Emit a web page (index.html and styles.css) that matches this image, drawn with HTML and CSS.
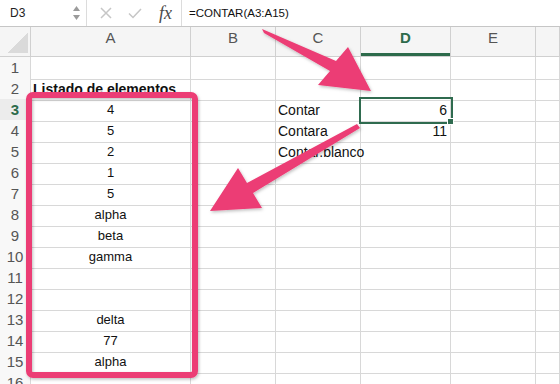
FILE: index.html
```html
<!DOCTYPE html>
<html lang="es">
<head>
  <meta charset="UTF-8">
  <meta name="viewport" content="width=device-width, initial-scale=1.0">
  <title>Libro1</title>
  <link rel="stylesheet" href="styles.css">
</head>
<body>

  <!-- Formula bar -->
  <div class="formula-bar">
    <div class="name-box">
      <span>D3</span>
      <svg class="stepper" width="7" height="16" viewBox="0 0 7 16">
        <polygon points="0,6 3.5,1 7,6" />
        <polygon points="0,10 3.5,15 7,10" />
      </svg>
    </div>
    <div class="bar-buttons">
      <svg class="bar-icon" width="12" height="12" viewBox="0 0 12 12">
        <path d="M1 1 L11 11 M11 1 L1 11" />
      </svg>
      <svg class="bar-icon" width="14" height="11" viewBox="0 0 14 11">
        <path d="M1 5.5 L5 9.5 L13 1" />
      </svg>
      <span class="fx">fx</span>
    </div>
    <div class="formula">=CONTAR(A3:A15)</div>
  </div>

  <!-- Sheet grid -->
  <div class="sheet">
    <div class="row head">
      <div class="corner"></div>
      <div class="ch">A</div><div class="ch">B</div><div class="ch">C</div>
      <div class="ch active">D</div><div class="ch">E</div><div class="ch"></div>
    </div>
    <div class="row"><div class="rh">1</div><div class="c"></div><div class="c"></div><div class="c"></div><div class="c"></div><div class="c"></div><div class="c"></div></div>
    <div class="row"><div class="rh">2</div><div class="c bold">Listado de elementos</div><div class="c"></div><div class="c"></div><div class="c"></div><div class="c"></div><div class="c"></div></div>
    <div class="row"><div class="rh active">3</div><div class="c ctr">4</div><div class="c"></div><div class="c label">Contar</div><div class="c num selected">6</div><div class="c"></div><div class="c"></div></div>
    <div class="row"><div class="rh">4</div><div class="c ctr">5</div><div class="c"></div><div class="c label">Contara</div><div class="c num">11</div><div class="c"></div><div class="c"></div></div>
    <div class="row"><div class="rh">5</div><div class="c ctr">2</div><div class="c"></div><div class="c label">Contar.blanco</div><div class="c"></div><div class="c"></div><div class="c"></div></div>
    <div class="row"><div class="rh">6</div><div class="c ctr">1</div><div class="c"></div><div class="c"></div><div class="c"></div><div class="c"></div><div class="c"></div></div>
    <div class="row"><div class="rh">7</div><div class="c ctr">5</div><div class="c"></div><div class="c"></div><div class="c"></div><div class="c"></div><div class="c"></div></div>
    <div class="row"><div class="rh">8</div><div class="c ctr">alpha</div><div class="c"></div><div class="c"></div><div class="c"></div><div class="c"></div><div class="c"></div></div>
    <div class="row"><div class="rh">9</div><div class="c ctr">beta</div><div class="c"></div><div class="c"></div><div class="c"></div><div class="c"></div><div class="c"></div></div>
    <div class="row"><div class="rh">10</div><div class="c ctr">gamma</div><div class="c"></div><div class="c"></div><div class="c"></div><div class="c"></div><div class="c"></div></div>
    <div class="row"><div class="rh">11</div><div class="c ctr"></div><div class="c"></div><div class="c"></div><div class="c"></div><div class="c"></div><div class="c"></div></div>
    <div class="row"><div class="rh">12</div><div class="c ctr"></div><div class="c"></div><div class="c"></div><div class="c"></div><div class="c"></div><div class="c"></div></div>
    <div class="row"><div class="rh">13</div><div class="c ctr">delta</div><div class="c"></div><div class="c"></div><div class="c"></div><div class="c"></div><div class="c"></div></div>
    <div class="row"><div class="rh">14</div><div class="c ctr">77</div><div class="c"></div><div class="c"></div><div class="c"></div><div class="c"></div><div class="c"></div></div>
    <div class="row"><div class="rh">15</div><div class="c ctr">alpha</div><div class="c"></div><div class="c"></div><div class="c"></div><div class="c"></div><div class="c"></div></div>
    <div class="row"><div class="rh">16</div><div class="c"></div><div class="c"></div><div class="c"></div><div class="c"></div><div class="c"></div><div class="c"></div></div>
  </div>

  <!-- Annotations drawn on top of the sheet -->
  <svg class="markup" width="560" height="384" viewBox="0 0 560 384">
    <defs>
      <filter id="shadow" x="-10%" y="-10%" width="130%" height="130%">
        <feDropShadow dx="1" dy="1.5" stdDeviation="1.5" flood-color="#000" flood-opacity="0.25" />
      </filter>
    </defs>
    <g filter="url(#shadow)" fill="#ec3c74">
      <rect x="29" y="95" width="166" height="280" rx="4" fill="none" stroke="#ec3c74" stroke-width="6" />
      <polygon points="262,29 264,33 330,71 318,85 371,91 348,47 336,61" />
      <polygon points="357,124 360,128 253,193 262,208 210,211 238,168 247,183" />
    </g>
  </svg>

</body>
</html>
```

FILE: styles.css
```css
body {
  margin: 0;
  font-family: "Liberation Sans", Arial, sans-serif;
  background: #fff;
  color: #111;
  width: 560px;
  height: 384px;
  overflow: hidden;
  position: relative;
}

/* Formula bar */
.formula-bar {
  display: flex;
  align-items: center;
  height: 27px;
  box-sizing: border-box;
  border-bottom: 1px solid #c6c6c6;
  background: #fff;
}

.name-box {
  width: 87px;
  height: 100%;
  box-sizing: border-box;
  display: flex;
  align-items: center;
  justify-content: space-between;
  padding: 0 6px 0 10px;
  border-right: 1px solid #dcdcdc;
  font-size: 12px;
  color: #222;
}

.stepper polygon {
  fill: #9b9b9b;
}

.bar-buttons {
  width: 95px;
  height: 100%;
  box-sizing: border-box;
  display: flex;
  align-items: center;
  padding-left: 13px;
  border-right: 1px solid #dcdcdc;
}

.bar-icon {
  margin-right: 16px;
}

.bar-icon path {
  fill: none;
  stroke: #c6c6c6;
  stroke-width: 1.5;
}

.fx {
  font-family: "Liberation Serif", serif;
  font-style: italic;
  font-size: 18px;
  color: #4a4a4a;
  margin-left: 1px;
}

.formula {
  padding-left: 7px;
  font-size: 11.5px;
  color: #111;
}

/* Sheet grid */
.row {
  display: grid;
  grid-template-columns: 31px 160px 85px 85px 90px 85px 1fr;
  height: 21px;
}

.row > div {
  box-sizing: border-box;
  border-right: 1px solid #d8d8d8;
  border-bottom: 1px solid #d8d8d8;
  white-space: nowrap;
  line-height: 22px;
}

.row.head {
  height: 30px;
}

.row.head > div {
  background: #f5f5f5;
  border-color: #d0d0d0;
}

.corner {
  position: relative;
}

.corner::after {
  content: "";
  position: absolute;
  right: 2px;
  bottom: 3px;
  width: 20px;
  height: 20px;
  background: linear-gradient(to bottom right, transparent 50%, #dadada 50%);
}

.ch {
  text-align: center;
  font-size: 15px;
  line-height: 30px;
  color: #555;
}

.ch.active {
  background: #eaeaea;
  color: #2d6b4b;
  font-weight: bold;
  box-shadow: inset 0 -3px 0 #2d6b4b;
}

.rh {
  background: #f8f8f8;
  text-align: center;
  font-size: 15px;
  color: #555;
}

.rh.active {
  color: #2d6b4b;
  font-weight: bold;
  background: #ececec;
}

.c {
  padding: 0 3px;
  font-size: 13px;
}

.ctr {
  text-align: center;
}

.bold {
  font-weight: bold;
  font-size: 14px;
  padding-left: 2px;
}

.label {
  font-size: 14px;
  padding-left: 2px;
}

.num {
  text-align: right;
  font-size: 14px;
}

.selected {
  position: relative;
  outline: 2px solid #2f6b4f;
}

.selected::after {
  content: "";
  position: absolute;
  right: -4px;
  bottom: -4px;
  width: 5px;
  height: 5px;
  background: #2f6b4f;
  border: 1px solid #fff;
}

.markup {
  position: absolute;
  top: 0;
  left: 0;
  pointer-events: none;
}
```
